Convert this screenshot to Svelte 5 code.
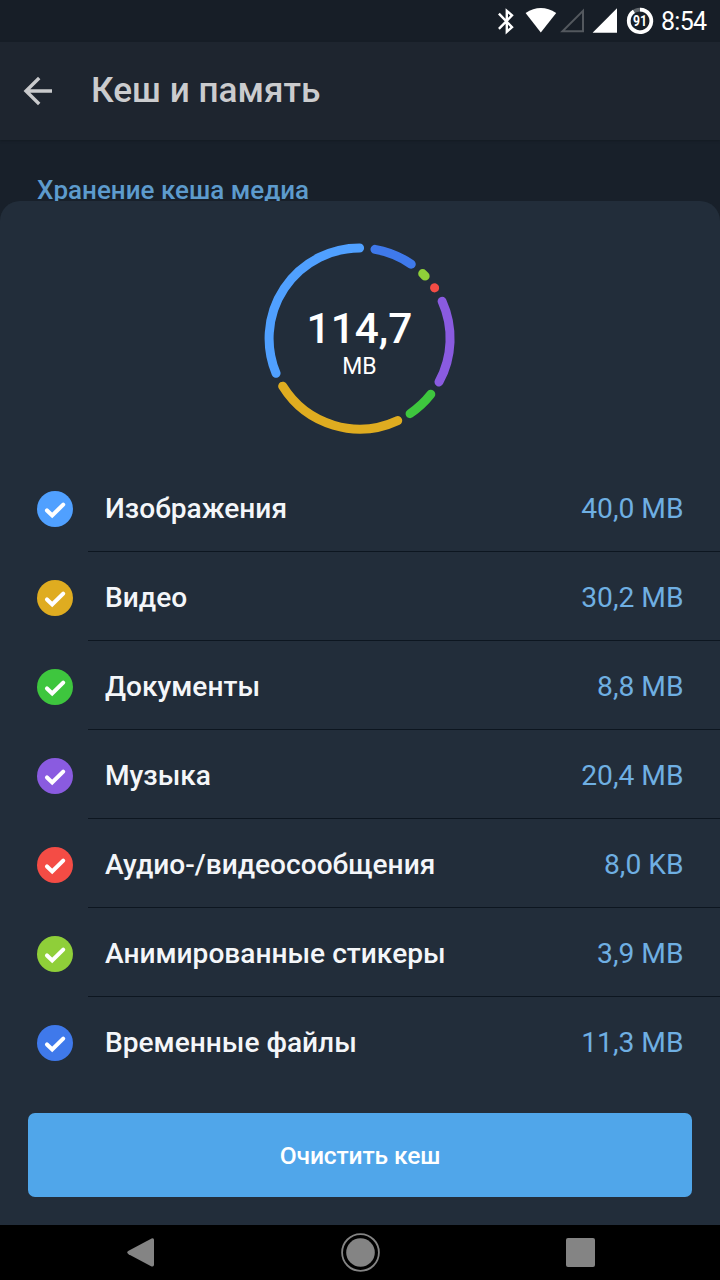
<script lang="ts">
  const categories = [
    { name: 'Изображения', size: '40,0 MB', color: '#50a0ff' },
    { name: 'Видео', size: '30,2 MB', color: '#dfac20' },
    { name: 'Документы', size: '8,8 MB', color: '#3ec63e' },
    { name: 'Музыка', size: '20,4 MB', color: '#8a5be0' },
    { name: 'Аудио-/видеосообщения', size: '8,0 KB', color: '#f44c45' },
    { name: 'Анимированные стикеры', size: '3,9 MB', color: '#8fcf39' },
    { name: 'Временные файлы', size: '11,3 MB', color: '#3f79eb' }
  ];

  // start / end in degrees, clockwise from the top
  const segments = [
    { color: '#3f79eb', start: 9.8, end: 34.8 },
    { color: '#8fcf39', start: 44.2, end: 46.4 },
    { color: '#f44c45', start: 55.9, end: 56.0 },
    { color: '#8a5be0', start: 65.7, end: 118.7 },
    { color: '#3ec63e', start: 128.1, end: 146.1 },
    { color: '#dfac20', start: 155.1, end: 238.2 },
    { color: '#50a0ff', start: 247.4, end: 360 }
  ];

  const radius = 90.5;

  function point(deg: number) {
    const a = (deg * Math.PI) / 180;
    return `${(radius * Math.sin(a)).toFixed(2)} ${(-radius * Math.cos(a)).toFixed(2)}`;
  }

  function arc(start: number, end: number) {
    return `M${point(start)}A${radius} ${radius} 0 0 1 ${point(end)}`;
  }
</script>

<div class="screen">
  <div class="status-bar">
    <svg width="180" height="42" viewBox="0 0 180 42">
      <path d="M18.9 13.6L32 27.2 26.8 31.8V10.8L32 15.4 18.9 28.8" fill="none" stroke="#fff" stroke-width="2.4" />
      <path d="M60.8 32.4L45.6 13Q60.8 3.2 76.2 13z" fill="#fff" />
      <path d="M103 10.8V31.3H82.5z" fill="none" stroke="#53585e" stroke-width="2" />
      <path d="M137 8.3V32.7H112.6z" fill="#fff" />
      <circle cx="160" cy="20.9" r="11.3" fill="none" stroke="#5e646a" stroke-width="3.7" />
      <path d="M160 9.6A11.3 11.3 0 1 1 153.9 11.4" fill="none" stroke="#fff" stroke-width="3.7" />
      <text x="160" y="26.3" text-anchor="middle" textLength="14" lengthAdjust="spacingAndGlyphs" class="battery">91</text>
    </svg>
    <span class="clock">8:54</span>
  </div>

  <header class="toolbar">
    <svg class="back" width="30" height="30" viewBox="0 0 30 30">
      <path d="M29 15H3M16.2 2L3 15l13.2 13" fill="none" stroke="#c9cacc" stroke-width="3.4" />
    </svg>
    <h1>Кеш и память</h1>
  </header>

  <div class="section">Хранение кеша медиа</div>

  <main class="sheet">
    <div class="chart">
      <svg width="200" height="200" viewBox="-99.6 -100.5 200 200">
        {#each segments as s}
          <path d={arc(s.start, s.end)} stroke={s.color} fill="none" stroke-width="9" stroke-linecap="round" />
        {/each}
      </svg>
      <div class="total">
        <strong>114,7</strong>
        <span>MB</span>
      </div>
    </div>

    <ul class="list">
      {#each categories as c}
        <li>
          <svg class="check" width="36" height="36" viewBox="0 0 36 36">
            <circle cx="18" cy="18" r="18" fill={c.color} />
            <path
              d="M10 19.4l5.2 5L26.2 13.6"
              fill="none"
              stroke="#fff"
              stroke-width="4.1"
              stroke-linecap="round"
              stroke-linejoin="miter"
            />
          </svg>
          <div class="row">
            <span class="name">{c.name}</span>
            <span class="size">{c.size}</span>
          </div>
        </li>
      {/each}
    </ul>

    <button class="clear">Очистить кеш</button>
  </main>

  <nav class="nav-bar">
    <svg width="720" height="55" viewBox="0 0 720 55">
      <path d="M128.6 25.8L151.6 13.4Q154 12.6 154 15V39.5Q154 42.2 151.6 41.4L128.6 29.2Q125.8 27.5 128.6 25.8z" fill="#848484" />
      <circle cx="360.5" cy="27.5" r="14.3" fill="#848484" />
      <circle cx="360.5" cy="27.5" r="18.4" fill="none" stroke="#848484" stroke-width="1.8" />
      <rect x="566" y="13" width="29" height="29" rx="2" fill="#848484" />
    </svg>
  </nav>
</div>

<style>
  :global(body) {
    margin: 0;
    background: #000;
  }

  .screen {
    width: 720px;
    height: 1280px;
    display: flex;
    flex-direction: column;
    background: #18202a;
    font-family: Roboto, 'Noto Sans', sans-serif;
    overflow: hidden;
  }

  .status-bar {
    height: 42px;
    flex-shrink: 0;
    display: flex;
    align-items: center;
    padding-left: 480px;
    background: #171e27;
    color: #fff;
  }

  .status-bar svg {
    flex-shrink: 0;
  }

  .clock {
    padding: 2px 0 0 1px;
    font-size: 25px;
    letter-spacing: -0.7px;
    line-height: 40px;
  }

  .battery {
    font-size: 14.5px;
    font-weight: 700;
    fill: #fff;
  }

  .toolbar {
    height: 98px;
    flex-shrink: 0;
    display: flex;
    align-items: center;
    padding-left: 23px;
    background: #1e252f;
    box-shadow: 0 1px 2px #141b23;
  }

  .toolbar h1 {
    margin: 0 0 2px 38px;
    font-size: 35.2px;
    font-weight: 500;
    line-height: 40px;
    color: #cbccce;
  }

  .section {
    height: 61px;
    flex-shrink: 0;
    box-sizing: border-box;
    padding: 35px 37px 0;
    font-size: 26px;
    font-weight: 500;
    line-height: 30px;
    color: #5d9bcd;
  }

  .sheet {
    height: 1024px;
    flex-shrink: 0;
    background: #222d3a;
    border-radius: 20px 20px 0 0;
  }

  .chart {
    height: 262px;
    display: grid;
    justify-content: center;
    grid-template: 200px / 200px;
    padding-top: 37px;
    box-sizing: border-box;
  }

  .chart svg,
  .total {
    grid-area: 1 / 1;
  }

  .total {
    display: flex;
    flex-direction: column;
    align-items: center;
    padding: 66px 1px 0 0;
    color: #fff;
  }

  .total strong {
    font-size: 42.4px;
    font-weight: 500;
    line-height: 50px;
  }

  .total span {
    font-size: 23px;
    line-height: 26px;
  }

  .list {
    margin: 0;
    padding: 0;
    list-style: none;
  }

  .list li {
    height: 89px;
    display: flex;
    align-items: center;
    padding-left: 37px;
  }

  .check {
    flex-shrink: 0;
    margin: 2px 15px 0 0;
  }

  .row {
    flex: 1;
    height: 89px;
    box-sizing: border-box;
    display: flex;
    align-items: center;
    justify-content: space-between;
    padding: 2px 36.5px 0 17px;
    border-bottom: 1px solid #0d1620;
    font-size: 28.1px;
  }

  li:last-child .row {
    border-bottom-color: transparent;
  }

  .name {
    font-weight: 500;
    color: #f4f6f9;
  }

  .size {
    font-size: 28.2px;
    color: #6fafe2;
  }

  .clear {
    display: block;
    width: 664px;
    height: 84px;
    margin: 27px 28px 0;
    padding: 0;
    border: none;
    border-radius: 7px;
    background: #50a6ea;
    color: #fff;
    font-family: inherit;
    font-size: 24.6px;
    letter-spacing: -0.15px;
    font-weight: 500;
  }

  .nav-bar {
    height: 55px;
    flex-shrink: 0;
    background: #000;
  }

  .nav-bar svg {
    display: block;
  }
</style>
